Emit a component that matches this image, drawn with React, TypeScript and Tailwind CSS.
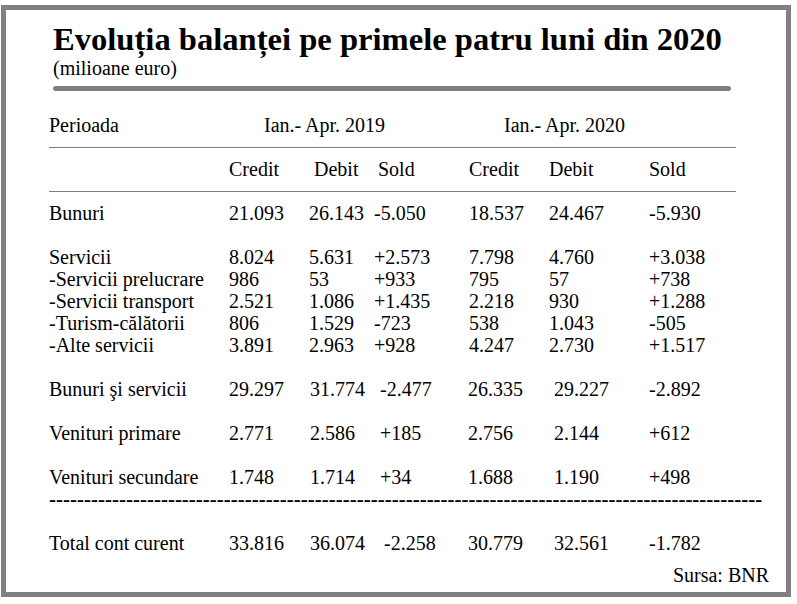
import React from 'react';

type Row = {
  label: string;
  values: string[];
  lower?: boolean;
  total?: boolean;
};

const rows: (Row | null)[] = [
  { label: 'Bunuri', values: ['21.093', '26.143', '-5.050', '18.537', '24.467', '-5.930'] },
  null,
  { label: 'Servicii', values: ['8.024', '5.631', '+2.573', '7.798', '4.760', '+3.038'] },
  { label: '-Servicii prelucrare', values: ['986', '53', '+933', '795', '57', '+738'] },
  { label: '-Servicii transport', values: ['2.521', '1.086', '+1.435', '2.218', '930', '+1.288'] },
  { label: '-Turism-călătorii', values: ['806', '1.529', '-723', '538', '1.043', '-505'] },
  { label: '-Alte servicii', values: ['3.891', '2.963', '+928', '4.247', '2.730', '+1.517'] },
  null,
  { label: 'Bunuri şi servicii', values: ['29.297', '31.774', '-2.477', '26.335', '29.227', '-2.892'], lower: true },
  null,
  { label: 'Venituri primare', values: ['2.771', '2.586', '+185', '2.756', '2.144', '+612'], lower: true },
  null,
  { label: 'Venituri secundare', values: ['1.748', '1.714', '+34', '1.688', '1.190', '+498'], lower: true },
];

const total: Row = {
  label: 'Total cont curent',
  values: ['33.816', '36.074', '-2.258', '30.779', '32.561', '-1.782'],
  lower: true,
  total: true,
};

// column widths: 229 | 309 | 374 | 469 | 549 | 649
const colW = ['w-[80px]', 'w-[65px]', 'w-[95px]', 'w-[80px]', 'w-[100px]', 'w-[80px]'];

const cellPad = (row: Row, i: number) => {
  if (!row.lower) return '';
  if (i === 1) return 'pl-[1px]';
  if (i === 2) return row.total ? 'pl-[10px]' : 'pl-[6px]';
  if (i === 3) return '-ml-[1px] mr-[1px]';
  if (i === 4) return 'pl-[5px]';
  return '';
};

const DataRow = ({ row }: { row: Row }) => (
  <div className="flex h-[22px]">
    <div className="w-[180px] whitespace-nowrap">{row.label}</div>
    {row.values.map((v, i) => (
      <div key={i} className={`${colW[i]} ${cellPad(row, i)} whitespace-nowrap`}>
        {v}
      </div>
    ))}
  </div>
);

export default function App() {
  return (
    <div className="pt-[5px] pl-[1px] bg-white font-['Liberation_Serif',serif]">
      <div className="w-[790px] h-[592px] border-[5px] border-[#808080] bg-white text-black text-[20px] leading-[22px] font-['Liberation_Serif',serif]">
        {/* Title block */}
        <div className="pl-[47px] pt-[11px]">
          <h1 className="text-[32.6px] leading-[36px] font-bold whitespace-nowrap">
            Evoluția balanței pe primele patru luni din 2020
          </h1>
          <div className="text-[20px] leading-[22px]">(milioane euro)</div>
          <div className="mt-[7px] w-[678px] h-[5px] rounded-full bg-[#808080]" />
        </div>

        {/* Table */}
        <div className="pl-[43px] mt-[23px]">
          <div className="flex h-[22px]">
            <div className="w-[180px]">Perioada</div>
            <div className="w-[240px] pl-[35px] whitespace-nowrap">Ian.- Apr. 2019</div>
            <div className="w-[240px] pl-[35px] whitespace-nowrap">Ian.- Apr. 2020</div>
          </div>
          <div className="mt-[11px] w-[687px] h-px bg-[#808080]" />
          <div className="flex h-[22px] mt-[10px]">
            <div className="w-[180px]" />
            <div className="w-[80px]">Credit</div>
            <div className="w-[65px] pl-[5px]">Debit</div>
            <div className="w-[95px] pl-[4px]">Sold</div>
            <div className="w-[80px]">Credit</div>
            <div className="w-[100px]">Debit</div>
            <div className="w-[80px]">Sold</div>
          </div>
          <div className="mt-[11px] w-[687px] h-px bg-[#808080]" />

          <div className="mt-[10px]">
            {rows.map((r, i) => (r ? <DataRow key={i} row={r} /> : <div key={i} className="h-[22px]" />))}
          </div>

          <div className="h-[22px] w-[713px] overflow-hidden whitespace-nowrap text-[21px] font-bold">
            {'-'.repeat(102)}
          </div>
          <div className="h-[22px]" />
          <DataRow row={total} />

          <div className="mt-[10px] w-[720px] text-right">Sursa: BNR</div>
        </div>
      </div>
    </div>
  );
}
